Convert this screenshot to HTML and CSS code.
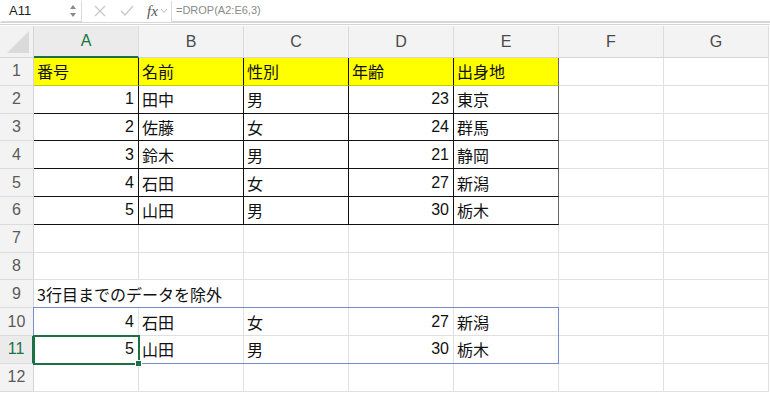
FILE: index.html
```html
<!DOCTYPE html>
<html lang="ja">
<head>
  <meta charset="UTF-8">
  <title>DROP</title>
  <link rel="stylesheet" href="styles.css">
</head>
<body>
  <div class="formula-bar">
    <div class="name-box">
      <span>A11</span>
      <svg class="spin" width="8" height="14" viewBox="0 0 8 14"><path d="M1 5 L4 1 L7 5 Z M1 9 L4 13 L7 9 Z" fill="#8a8a8a"/></svg>
    </div>
    <div class="fb-icons">
      <svg width="14" height="14" viewBox="0 0 14 14"><path d="M2 2 L12 12 M12 2 L2 12" stroke="#c8c8c8" stroke-width="1.3" fill="none"/></svg>
      <svg width="16" height="14" viewBox="0 0 16 14"><path d="M2 7 L6 11 L14 2" stroke="#c8c8c8" stroke-width="1.3" fill="none"/></svg>
      <span class="fx">fx</span>
      <svg width="8" height="6" viewBox="0 0 8 6"><path d="M1 1 L4 4.5 L7 1" stroke="#b5b5b5" stroke-width="1" fill="none"/></svg>
    </div>
    <div class="formula">=DROP(A2:E6,3)</div>
  </div>

  <div class="sheet">
    <div class="corner"></div>
    <div class="colhead sel">A</div>
    <div class="colhead">B</div>
    <div class="colhead">C</div>
    <div class="colhead">D</div>
    <div class="colhead">E</div>
    <div class="colhead">F</div>
    <div class="colhead">G</div>

    <div class="rowhead">1</div>
    <div class="c hd">番号</div>
    <div class="c hd">名前</div>
    <div class="c hd">性別</div>
    <div class="c hd">年齢</div>
    <div class="c hd last">出身地</div>
    <div class="c"></div>
    <div class="c"></div>

    <div class="rowhead">2</div>
    <div class="c tb num">1</div>
    <div class="c tb">田中</div>
    <div class="c tb">男</div>
    <div class="c tb num">23</div>
    <div class="c tb last">東京</div>
    <div class="c"></div>
    <div class="c"></div>

    <div class="rowhead">3</div>
    <div class="c tb num">2</div>
    <div class="c tb">佐藤</div>
    <div class="c tb">女</div>
    <div class="c tb num">24</div>
    <div class="c tb last">群馬</div>
    <div class="c"></div>
    <div class="c"></div>

    <div class="rowhead">4</div>
    <div class="c tb num">3</div>
    <div class="c tb">鈴木</div>
    <div class="c tb">男</div>
    <div class="c tb num">21</div>
    <div class="c tb last">静岡</div>
    <div class="c"></div>
    <div class="c"></div>

    <div class="rowhead">5</div>
    <div class="c tb num">4</div>
    <div class="c tb">石田</div>
    <div class="c tb">女</div>
    <div class="c tb num">27</div>
    <div class="c tb last">新潟</div>
    <div class="c"></div>
    <div class="c"></div>

    <div class="rowhead">6</div>
    <div class="c tb num">5</div>
    <div class="c tb">山田</div>
    <div class="c tb">男</div>
    <div class="c tb num">30</div>
    <div class="c tb last">栃木</div>
    <div class="c"></div>
    <div class="c"></div>

    <div class="rowhead">7</div>
    <div class="c"></div><div class="c"></div><div class="c"></div><div class="c"></div><div class="c"></div><div class="c"></div><div class="c"></div>

    <div class="rowhead">8</div>
    <div class="c"></div><div class="c"></div><div class="c"></div><div class="c"></div><div class="c"></div><div class="c"></div><div class="c"></div>

    <div class="rowhead">9</div>
    <div class="c overflow">3行目までのデータを除外</div>
    <div class="c"></div><div class="c"></div><div class="c"></div><div class="c"></div><div class="c"></div><div class="c"></div>

    <div class="rowhead">10</div>
    <div class="c num">4</div>
    <div class="c">石田</div>
    <div class="c">女</div>
    <div class="c num">27</div>
    <div class="c">新潟</div>
    <div class="c"></div>
    <div class="c"></div>

    <div class="rowhead sel">11</div>
    <div class="c num active">5</div>
    <div class="c">山田</div>
    <div class="c">男</div>
    <div class="c num">30</div>
    <div class="c">栃木</div>
    <div class="c"></div>
    <div class="c"></div>

    <div class="rowhead">12</div>
    <div class="c"></div><div class="c"></div><div class="c"></div><div class="c"></div><div class="c"></div><div class="c"></div><div class="c"></div>

    <div class="spill"></div>
  </div>
</body>
</html>
```

FILE: styles.css
```css
body { margin: 0; background: #fff; font-family: "Noto Sans CJK JP", "Noto Sans", sans-serif; color: #111; overflow: hidden; }

.formula-bar { display: flex; align-items: center; height: 22px; border-bottom: 3px double #d6d6d6; background: #fff; }
.name-box { box-sizing: border-box; width: 81px; height: 21px; margin-left: 1px; border: 1px solid #d9d9d9; border-left: none; border-top: none; display: flex; align-items: center; justify-content: space-between; padding: 0 4px 0 8px; font-family: "Liberation Sans", Arial, sans-serif; font-size: 13px; color: #222; }
.fb-icons { display: flex; align-items: center; gap: 12px; padding-left: 11px; width: 78px; }
.fx { font-family: "Liberation Serif", serif; font-style: italic; font-size: 15px; color: #555; margin-right: -10px; }
.formula { flex: 1; box-sizing: border-box; height: 21px; border-left: 1px solid #d9d9d9; border-bottom: 1px solid #d9d9d9; padding: 3px 4px; font-family: "Liberation Sans", Arial, sans-serif; font-size: 11px; color: #8a8a8a; }

.sheet { position: relative; display: grid; grid-template-columns: 34px repeat(7, 105px); grid-template-rows: 32px repeat(12, 27.8px); margin-top: 1px; }

.corner { background: #f2f2f2; border-right: 1px solid #d4d4d4; border-bottom: 1px solid #d4d4d4; position: relative; }
.corner::after { content: ""; position: absolute; right: 4px; bottom: 4px; width: 0; height: 0; border-left: 22px solid transparent; border-bottom: 22px solid #dadada; }

.colhead { box-sizing: border-box; background: #f3f3f3; border-right: 1px solid #dcdcdc; border-bottom: 1px solid #d4d4d4; display: flex; align-items: center; justify-content: center; font-family: "Liberation Sans", Arial, sans-serif; font-size: 16px; color: #4a4a4a; }
.colhead.sel { background: #ebebeb; color: #1d7044; border-bottom: 2px solid #1d7044; }

.rowhead { box-sizing: border-box; background: #f3f3f3; border-right: 1px solid #d4d4d4; border-bottom: 1px solid #dcdcdc; display: flex; align-items: center; justify-content: center; font-family: "Liberation Sans", Arial, sans-serif; font-size: 16px; color: #5a5a5a; }
.rowhead.sel { background: #ebebeb; color: #1d7044; border-right: 2px solid #1d7044; }

.c { box-sizing: border-box; border-right: 1px solid #e0e0e0; border-bottom: 1px solid #e0e0e0; display: flex; align-items: center; padding: 0 3px; font-size: 16px; white-space: nowrap; }
.c.num { justify-content: flex-end; padding-right: 4px; font-family: "Liberation Sans", Arial, sans-serif; }
.c.hd { background: #ffff00; border-right-color: #111; border-bottom-color: #c8c800; }
.c.tb { border-right-color: #111; border-bottom-color: #111; }
.c.last { border-right-color: #666; }
.c.overflow { overflow: visible; border-right: none; z-index: 1; }

.c.active { outline: 2px solid #1d7044; outline-offset: -1px; position: relative; z-index: 2; }
.c.active::after { content: ""; position: absolute; right: -4px; bottom: -4px; width: 5px; height: 5px; background: #1d7044; border: 1px solid #fff; }

.spill { position: absolute; inset: -1px 0 0 -1px; grid-column: 2 / 7; grid-row: 11 / 13; border: 1px solid #7a8ccc; pointer-events: none; z-index: 1; }
```
